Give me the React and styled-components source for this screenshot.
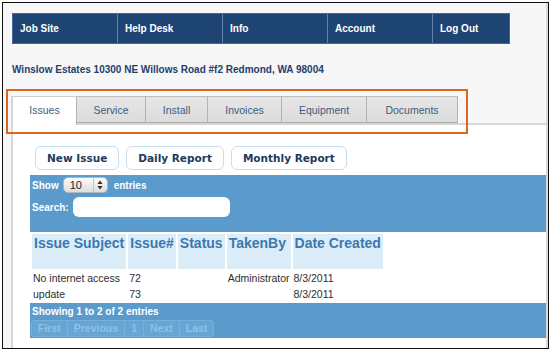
import styled, { createGlobalStyle } from "styled-components";

const GlobalStyle = createGlobalStyle`
  html, body {
    margin: 0;
    padding: 0;
    background: #fff;
  }
  body {
    font-family: "Liberation Sans", Arial, Helvetica, sans-serif;
  }
`;

const navItems = ["Job Site", "Help Desk", "Info", "Account", "Log Out"];

const tabs = [
  { label: "Issues", width: 66, active: true },
  { label: "Service", width: 69 },
  { label: "Install", width: 62 },
  { label: "Invoices", width: 74 },
  { label: "Equipment", width: 85 },
  { label: "Documents", width: 91 },
];

const columns = ["Issue Subject", "Issue#", "Status", "TakenBy", "Date Created"];

const rows = [
  ["No internet access", "72", "", "Administrator", "8/3/2011"],
  ["update", "73", "", "", "8/3/2011"],
];

const pages = ["First", "Previous", "1", "Next", "Last"];

const Frame = styled.div`
  margin: 2px 0 0 2px;
  width: 547px;
  height: 347px;
  box-sizing: border-box;
  border: 1px solid #111;
  overflow: hidden;
  display: flex;
`;

const Page = styled.div`
  flex: 1;
  display: flex;
  flex-direction: column;
  background: #f7f7f8;
  border-right: 2px solid #dadada;
`;

const Nav = styled.nav`
  display: flex;
  margin: 10px 0 0 9px;
  width: 498px;
  height: 31px;
  box-sizing: border-box;
  background: #1d4473;
  border: 1px solid #46689a;
`;

const NavItem = styled.div`
  display: flex;
  align-items: center;
  box-sizing: border-box;
  width: ${(p) => (p.$last ? "auto" : "105px")};
  flex: ${(p) => (p.$last ? 1 : "none")};
  padding-left: 7px;
  border-right: ${(p) => (p.$last ? "none" : "1px solid #6583a9")};
  color: #fff;
  font-size: 10px;
  font-weight: bold;
`;

const Address = styled.div`
  margin: 19px 0 0 9px;
  line-height: 14px;
  font-size: 10px;
  font-weight: bold;
  color: #1f3f6c;
`;

const TabsArea = styled.div`
  position: relative;
  margin-top: 19px;
`;

const Highlight = styled.div`
  position: absolute;
  left: 3px;
  top: -7px;
  width: 462px;
  height: 45px;
  box-sizing: border-box;
  border: 2px solid #e0641f;
  pointer-events: none;
`;

const TabStrip = styled.div`
  display: flex;
  align-items: flex-start;
  margin-left: 8px;
  height: 27px;
  border-bottom: 2px solid #d6d6d6;
`;

const Tab = styled.div`
  display: flex;
  align-items: center;
  justify-content: center;
  box-sizing: border-box;
  width: ${(p) => p.$width}px;
  height: ${(p) => (p.$active ? "29px" : "27px")};
  background: ${(p) =>
    p.$active ? "#fff" : "linear-gradient(#e6e6e6, #dcdcdc)"};
  border-top: 1px solid ${(p) => (p.$active ? "#cfcfcf" : "#bdbdbd")};
  border-right: 1px solid #b3b3b3;
  border-left: ${(p) => (p.$active ? "2px solid #d6d6d6" : "none")};
  border-bottom: ${(p) => (p.$active ? "none" : "1px solid #a9a9a9")};
  padding-bottom: ${(p) => (p.$active ? "2px" : "0")};
  color: #3d5b80;
  font-size: 10.5px;
`;

const Content = styled.div`
  flex: 1;
  margin-left: 8px;
  padding: 21px 0 0 17px;
  background: #fff;
  border-left: 2px solid #d6d6d6;
`;

const ButtonRow = styled.div`
  display: flex;
  gap: 7px;
  margin-left: 5px;
`;

const Button = styled.button`
  height: 24px;
  padding: 0 11px;
  background: #fff;
  border: 1px solid #c6def1;
  border-radius: 6px;
  color: #1c3a60;
  font-family: "DejaVu Sans", Verdana, sans-serif;
  font-size: 10.5px;
  font-weight: bold;
`;

const Panel = styled.div`
  margin-top: 5px;
  padding: 2px 0 15px 2px;
  background: #5b9bcc;
  color: #fff;
  font-size: 10px;
  font-weight: bold;
`;

const ControlRow = styled.div`
  display: flex;
  align-items: center;
  height: ${(p) => p.$h}px;
  margin-top: ${(p) => p.$mt || 0}px;
`;

const Select = styled.div`
  display: flex;
  width: 45px;
  height: 16px;
  box-sizing: border-box;
  margin: 0 6px 0 4px;
  border: 1px solid #aeb8c2;
  border-radius: 5px;
  background: linear-gradient(#fbfbfb, #dedede);
  color: #222;
  font-size: 11px;
  font-weight: normal;
`;

const SelectValue = styled.span`
  flex: 1;
  padding-left: 6px;
  line-height: 14px;
`;

const SelectArrows = styled.span`
  display: flex;
  align-items: center;
  justify-content: center;
  width: 13px;
  border-left: 1px solid #c4c4c4;
`;

const SearchInput = styled.div`
  width: 157px;
  height: 20px;
  margin-left: 4px;
  border-radius: 6px;
  background: #fff;
`;

const Table = styled.table`
  border-spacing: 2px;
`;

const Th = styled.th`
  padding: 1px 2px 17px;
  line-height: 17px;
  background: #dcedfa;
  color: #3a78b0;
  font-size: 14px;
  font-weight: bold;
  text-align: left;
  vertical-align: top;
  white-space: nowrap;
`;

const Td = styled.td`
  padding: 0 1px;
  height: 14px;
  line-height: 14px;
  color: #2e2e2e;
  font-size: 10.5px;
  white-space: nowrap;
`;

const Footer = styled.div`
  padding: 2px 0 1px 1px;
  background: #5b9bcc;
`;

const Showing = styled.div`
  padding-left: 1px;
  line-height: 13px;
  color: #fff;
  font-size: 10px;
  font-weight: bold;
`;

const Pager = styled.div`
  display: inline-flex;
  height: 17px;
  box-sizing: border-box;
  border: 1px solid #78b0db;
  border-radius: 3px;
  overflow: hidden;
`;

const PageButton = styled.span`
  display: flex;
  align-items: center;
  padding: 0 6px;
  background: #67a5d5;
  border-right: ${(p) => (p.$last ? "none" : "1px solid #78b0db")};
  color: #8fc1e8;
  font-size: 10.5px;
  font-weight: bold;
`;

function UpDown() {
  return (
    <svg width="6" height="10" viewBox="0 0 6 10">
      <path d="M3 0.5 L5.6 4 L0.4 4 Z" fill="#333" />
      <path d="M3 9.5 L5.6 6 L0.4 6 Z" fill="#333" />
    </svg>
  );
}

export default function App() {
  return (
    <>
      <GlobalStyle />
      <Frame>
        <Page>
          <Nav>
            {navItems.map((item, i) => (
              <NavItem key={item} $last={i === navItems.length - 1}>
                {item}
              </NavItem>
            ))}
          </Nav>

          <Address>Winslow Estates 10300 NE Willows Road #f2 Redmond, WA 98004</Address>

          <TabsArea>
            <TabStrip>
              {tabs.map((t) => (
                <Tab key={t.label} $width={t.width} $active={t.active}>
                  {t.label}
                </Tab>
              ))}
            </TabStrip>
            <Highlight />
          </TabsArea>

          <Content>
            <ButtonRow>
              <Button>New Issue</Button>
              <Button>Daily Report</Button>
              <Button>Monthly Report</Button>
            </ButtonRow>

            <Panel>
              <ControlRow $h={16}>
                Show
                <Select>
                  <SelectValue>10</SelectValue>
                  <SelectArrows>
                    <UpDown />
                  </SelectArrows>
                </Select>
                entries
              </ControlRow>
              <ControlRow $h={20} $mt={4}>
                Search:
                <SearchInput />
              </ControlRow>
            </Panel>

            <Table>
              <thead>
                <tr>
                  {columns.map((c) => (
                    <Th key={c}>{c}</Th>
                  ))}
                </tr>
              </thead>
              <tbody>
                {rows.map((r, i) => (
                  <tr key={i}>
                    {r.map((cell, j) => (
                      <Td key={j}>{cell}</Td>
                    ))}
                  </tr>
                ))}
              </tbody>
            </Table>

            <Footer>
              <Showing>Showing 1 to 2 of 2 entries</Showing>
              <Pager>
                {pages.map((p, i) => (
                  <PageButton key={p} $last={i === pages.length - 1}>
                    {p}
                  </PageButton>
                ))}
              </Pager>
            </Footer>
          </Content>
        </Page>
      </Frame>
    </>
  );
}
